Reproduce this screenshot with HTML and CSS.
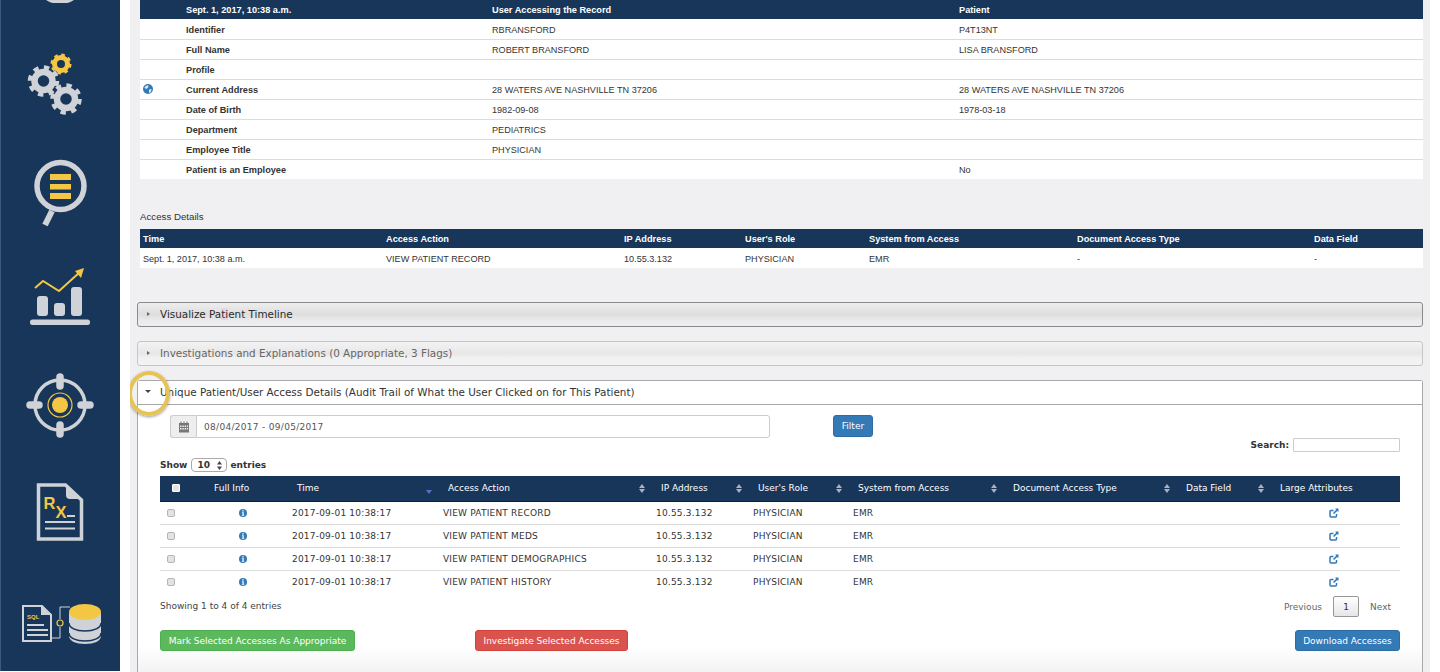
FILE: index.html
```html
<!DOCTYPE html>
<html lang="en">
<head>
<meta charset="utf-8">
<title>Access Details</title>
<link rel="stylesheet" href="styles.css">
</head>
<body>
<div class="app">
  <nav class="sidebar">
    <svg class="ico ico-top" width="120" height="3" viewBox="0 0 120 3"><ellipse cx="60" cy="-9" rx="17" ry="11" fill="none" stroke="#cfd2d6" stroke-width="4"/></svg>
    <svg class="ico ico-gears" width="120" height="64" viewBox="0 51 120 64">
      <g fill="none" stroke="#cfd2d6">
        <circle cx="43.500" cy="81" r="9" stroke-width="6.500"/>
        <circle cx="43.500" cy="81" r="13.500" stroke-width="4.500" stroke-dasharray="5.300 5.300"/>
        <circle cx="66" cy="99" r="9" stroke-width="6.500"/>
        <circle cx="66" cy="99" r="13.500" stroke-width="4.500" stroke-dasharray="5.300 5.300"/>
      </g>
      <g fill="none" stroke="#f3c744">
        <circle cx="61" cy="64" r="6.500" stroke-width="5"/>
        <circle cx="61" cy="64" r="9" stroke-width="3" stroke-dasharray="3.500 3.570"/>
      </g>
    </svg>
    <svg class="ico ico-search" width="120" height="68" viewBox="0 159 120 68">
      <circle cx="60.500" cy="186" r="23.500" fill="none" stroke="#cfd2d6" stroke-width="5.500"/>
      <path d="M52 211 45 225" stroke="#cfd2d6" stroke-width="6"/>
      <path d="M50 174h21v6H50zM50 184h21v5.500H50zM50 193h21v6H50z" fill="#f3c744"/>
    </svg>
    <svg class="ico ico-chart" width="120" height="58" viewBox="0 268 120 58">
      <path d="M35 288 43 281 59 291 80 272" fill="none" stroke="#f3c744" stroke-width="2"/>
      <path d="M84 268 75 271 81 278z" fill="#f3c744"/>
      <rect x="37" y="296" width="11" height="20" rx="3" fill="#cfd2d6"/>
      <rect x="54" y="303" width="11" height="13" rx="3" fill="#cfd2d6"/>
      <rect x="71" y="287" width="11" height="29" rx="3" fill="#cfd2d6"/>
      <rect x="30" y="319.500" width="60" height="5.500" rx="2.500" fill="#cfd2d6"/>
    </svg>
    <svg class="ico ico-target" width="120" height="66" viewBox="0 373 120 66">
      <circle cx="60" cy="405" r="25" fill="none" stroke="#cfd2d6" stroke-width="3.500"/>
      <path d="M60 377v9M60 425v9M30 405h9M81 405h9" stroke="#cfd2d6" stroke-width="7.500" stroke-linecap="round"/>
      <circle cx="60" cy="405" r="12" fill="none" stroke="#f3c744" stroke-width="1.200"/>
      <circle cx="60" cy="405" r="8" fill="#f3c744"/>
    </svg>
    <svg class="ico ico-rx" width="120" height="59" viewBox="0 483 120 59">
      <path d="M38.500 485h27L81.500 500v39h-43z" fill="none" stroke="#cfd2d6" stroke-width="3.500"/>
      <path d="M66 484v11a4 4 0 0 0 4 4h12z" fill="#cfd2d6"/>
      <text class="rx" x="43.500" y="509">R<tspan dy="9">X</tspan></text>
      <path d="M67 516h8M45 522h30M45 528.500h30" stroke="#cfd2d6" stroke-width="2"/>
    </svg>
    <svg class="ico ico-sql" width="120" height="42" viewBox="0 603 120 42">
      <path d="M23 606h19l9 9v26H23z" fill="none" stroke="#cfd2d6" stroke-width="2"/>
      <path d="M41 605v10h11z" fill="#cfd2d6"/>
      <text class="sql" x="27" y="619">SQL</text>
      <path d="M27 625h17M27 630h21M27 635h21" stroke="#cfd2d6" stroke-width="2"/>
      <path d="M52 638h8v-11M60 619v-12h10" fill="none" stroke="#cfd2d6" stroke-width="1"/>
      <circle cx="60" cy="623" r="3" fill="none" stroke="#f3c744" stroke-width="1.200"/>
      <path d="M69 613v23c0 5 7 8 16 8s16-3 16-8v-23z" fill="#cfd2d6"/>
      <path d="M69 623c0 5 7 8 16 8s16-3 16-8M69 633c0 5 7 8 16 8s16-3 16-8" fill="none" stroke="#17365a" stroke-width="1.500"/>
      <ellipse cx="85" cy="612" rx="16" ry="8" fill="#f3c744"/>
    </svg>
  </nav>

  <main class="main">
    <table class="info">
      <thead>
        <tr><th></th><th>Sept. 1, 2017, 10:38 a.m.</th><th>User Accessing the Record</th><th>Patient</th></tr>
      </thead>
      <tbody>
        <tr><td></td><td class="lbl">Identifier</td><td>RBRANSFORD</td><td>P4T13NT</td></tr>
        <tr><td></td><td class="lbl">Full Name</td><td>ROBERT BRANSFORD</td><td>LISA BRANSFORD</td></tr>
        <tr><td></td><td class="lbl">Profile</td><td></td><td></td></tr>
        <tr>
          <td><svg class="globe" width="10" height="10" viewBox="0 0 10 10"><circle cx="5" cy="5" r="5" fill="#337ab7"/><path d="M2 2.500 5 1 5.500 3 3.500 5 1.500 4zM6 5.500 8.500 5 8 8 6 9z" fill="#dbe8f3"/></svg></td>
          <td class="lbl">Current Address</td><td>28 WATERS AVE NASHVILLE TN 37206</td><td>28 WATERS AVE NASHVILLE TN 37206</td>
        </tr>
        <tr><td></td><td class="lbl">Date of Birth</td><td>1982-09-08</td><td>1978-03-18</td></tr>
        <tr><td></td><td class="lbl">Department</td><td>PEDIATRICS</td><td></td></tr>
        <tr><td></td><td class="lbl">Employee Title</td><td>PHYSICIAN</td><td></td></tr>
        <tr><td></td><td class="lbl">Patient is an Employee</td><td></td><td>No</td></tr>
      </tbody>
    </table>

    <h4 class="caption">Access Details</h4>
    <table class="access">
      <thead>
        <tr><th>Time</th><th>Access Action</th><th>IP Address</th><th>User's Role</th><th>System from Access</th><th>Document Access Type</th><th>Data Field</th></tr>
      </thead>
      <tbody>
        <tr><td>Sept. 1, 2017, 10:38 a.m.</td><td>VIEW PATIENT RECORD</td><td>10.55.3.132</td><td>PHYSICIAN</td><td>EMR</td><td>-</td><td>-</td></tr>
      </tbody>
    </table>

    <div class="acc acc-hover"><span class="tri-r"></span><span>Visualize Pa<span class="cursor">ti</span>ent Timeline</span></div>
    <div class="acc acc-muted"><span class="tri-r"></span><span>Investigations and Explanations (0 Appropriate, 3 Flags)</span></div>

    <section class="panel">
      <div class="acc acc-open"><span class="tri-d"></span><span>Unique Patient/User Access Details (Audit Trail of What the User Clicked on for This Patient)</span></div>
      <div class="ring"></div>
      <div class="panel-body">
        <div class="filter-row">
          <div class="date-group">
            <span class="addon">
              <svg width="12" height="12" viewBox="0 0 12 12"><path d="M1 2h10v9.500H1z" fill="#777"/><path d="M2 4.500h1.500v1.500H2zM4.300 4.500h1.500v1.500H4.300zM6.600 4.500h1.500v1.500H6.600zM8.900 4.500h1.200v1.500H8.900zM2 7h1.500v1.500H2zM4.300 7h1.500v1.500H4.300zM6.600 7h1.500v1.500H6.600zM8.900 7h1.200v1.500H8.900z" fill="#eee"/><path d="M3 .5v2.500M6 .5v2.500M9 .5v2.500" stroke="#777"/></svg>
            </span>
            <span class="date-input">08/04/2017 - 09/05/2017</span>
          </div>
          <span class="btn btn-blue btn-filter">Filter</span>
        </div>
        <div class="search-row"><b>Search:</b><span class="search-input"></span></div>
        <div class="length-row"><b>Show</b><span class="select"><b>10</b><svg width="5" height="9" viewBox="0 0 5 9"><path d="M2.500 0 5 3.500H0zM2.500 9 0 5.500h5z" fill="#444"/></svg></span><b>entries</b></div>

        <table class="audit">
          <thead>
            <tr>
              <th class="c-check"><span class="head-check"></span></th>
              <th class="c-full">Full Info</th>
              <th class="sorted">Time</th>
              <th class="sort">Access Action</th>
              <th class="sort">IP Address</th>
              <th class="sort">User's Role</th>
              <th class="sort">System from Access</th>
              <th class="sort">Document Access Type</th>
              <th class="sort">Data Field</th>
              <th>Large Attributes</th>
            </tr>
          </thead>
          <tbody>
            <tr>
              <td><span class="check"></span></td>
              <td class="center"><svg class="i" width="8" height="8" viewBox="0 0 9 9"><circle cx="4.500" cy="4.500" r="4.500" fill="#337ab7"/><path d="M3.700 1.500h1.600v1.400H3.700zM3.300 3.700h2v3h.6v.9H3.200v-.9h.7V4.600h-.6z" fill="#fff"/></svg></td>
              <td>2017-09-01 10:38:17</td><td>VIEW PATIENT RECORD</td><td>10.55.3.132</td><td>PHYSICIAN</td><td>EMR</td><td></td><td></td>
              <td class="center last"><svg class="x" width="10" height="10" viewBox="0 0 10 10"><path d="M7.500 6v2a1 1 0 0 1-1 1H2a1 1 0 0 1-1-1V3.500a1 1 0 0 1 1-1h2.500" fill="none" stroke="#337ab7" stroke-width="1.500"/><path d="M6 .5h3.500V4L8.300 2.900 5 6 4 5l3.200-3.200z" fill="#337ab7"/></svg></td>
            </tr>
            <tr>
              <td><span class="check"></span></td>
              <td class="center"><svg class="i" width="8" height="8" viewBox="0 0 9 9"><circle cx="4.500" cy="4.500" r="4.500" fill="#337ab7"/><path d="M3.700 1.500h1.600v1.400H3.700zM3.300 3.700h2v3h.6v.9H3.200v-.9h.7V4.600h-.6z" fill="#fff"/></svg></td>
              <td>2017-09-01 10:38:17</td><td>VIEW PATIENT MEDS</td><td>10.55.3.132</td><td>PHYSICIAN</td><td>EMR</td><td></td><td></td>
              <td class="center last"><svg class="x" width="10" height="10" viewBox="0 0 10 10"><path d="M7.500 6v2a1 1 0 0 1-1 1H2a1 1 0 0 1-1-1V3.500a1 1 0 0 1 1-1h2.500" fill="none" stroke="#337ab7" stroke-width="1.500"/><path d="M6 .5h3.500V4L8.300 2.900 5 6 4 5l3.200-3.200z" fill="#337ab7"/></svg></td>
            </tr>
            <tr>
              <td><span class="check"></span></td>
              <td class="center"><svg class="i" width="8" height="8" viewBox="0 0 9 9"><circle cx="4.500" cy="4.500" r="4.500" fill="#337ab7"/><path d="M3.700 1.500h1.600v1.400H3.700zM3.300 3.700h2v3h.6v.9H3.200v-.9h.7V4.600h-.6z" fill="#fff"/></svg></td>
              <td>2017-09-01 10:38:17</td><td>VIEW PATIENT DEMOGRAPHICS</td><td>10.55.3.132</td><td>PHYSICIAN</td><td>EMR</td><td></td><td></td>
              <td class="center last"><svg class="x" width="10" height="10" viewBox="0 0 10 10"><path d="M7.500 6v2a1 1 0 0 1-1 1H2a1 1 0 0 1-1-1V3.500a1 1 0 0 1 1-1h2.500" fill="none" stroke="#337ab7" stroke-width="1.500"/><path d="M6 .5h3.500V4L8.300 2.900 5 6 4 5l3.200-3.200z" fill="#337ab7"/></svg></td>
            </tr>
            <tr>
              <td><span class="check"></span></td>
              <td class="center"><svg class="i" width="8" height="8" viewBox="0 0 9 9"><circle cx="4.500" cy="4.500" r="4.500" fill="#337ab7"/><path d="M3.700 1.500h1.600v1.400H3.700zM3.300 3.700h2v3h.6v.9H3.200v-.9h.7V4.600h-.6z" fill="#fff"/></svg></td>
              <td>2017-09-01 10:38:17</td><td>VIEW PATIENT HISTORY</td><td>10.55.3.132</td><td>PHYSICIAN</td><td>EMR</td><td></td><td></td>
              <td class="center last"><svg class="x" width="10" height="10" viewBox="0 0 10 10"><path d="M7.500 6v2a1 1 0 0 1-1 1H2a1 1 0 0 1-1-1V3.500a1 1 0 0 1 1-1h2.500" fill="none" stroke="#337ab7" stroke-width="1.500"/><path d="M6 .5h3.500V4L8.300 2.900 5 6 4 5l3.200-3.200z" fill="#337ab7"/></svg></td>
            </tr>
          </tbody>
        </table>

        <div class="foot-row">
          <span class="foot-info">Showing 1 to 4 of 4 entries</span>
          <div class="pager"><span>Previous</span><span class="page">1</span><span>Next</span></div>
        </div>
        <div class="action-row">
          <span class="btn btn-green">Mark Selected Accesses As Appropriate</span>
          <span class="btn btn-red">Investigate Selected Accesses</span>
          <span class="btn btn-blue btn-download">Download Accesses</span>
        </div>
      </div>
    </section>
  </main>
</div>
</body>
</html>
```

FILE: styles.css
```css
* { box-sizing: border-box; }
html, body { margin: 0; padding: 0; background: #fff; }
body { width: 1440px; height: 672px; overflow: hidden; color: #333; }

.app { display: flex; height: 672px; }

/* sidebar */
.sidebar {
  flex: 0 0 120px;
  height: 671px;
  background: #17365a;
  border-left: 1px solid #3c5a80;
  overflow: hidden;
}
.ico { display: block; margin-left: -1px; }
.ico-gears { margin-top: 48px; }
.ico-search { margin-top: 44px; }
.ico-chart { margin-top: 41px; }
.ico-target { margin-top: 47px; }
.ico-rx { margin-top: 44px; }
.ico-sql { margin-top: 61px; }
.rx { font: 700 16.5px "Liberation Sans", Arial, sans-serif; fill: #f3c744; }
.sql { font: 700 6px "Liberation Sans", Arial, sans-serif; fill: #f3c744; }

/* main column */
.main {
  flex: 0 0 1300px;
  margin-left: 10px;
  height: 672px;
  padding: 0 7px;
  background: #f0f0f2;
  overflow: hidden;
}

/* top tables */
.info, .access {
  width: 1283px;
  margin-left: 3px;
  border-collapse: collapse;
  table-layout: fixed;
  background: #fff;
  font: 9.1px "Liberation Sans", Arial, sans-serif;
}
.info th, .access th {
  background: #17365a;
  color: #fff;
  font-weight: 700;
  font-size: 9.2px;
  text-align: left;
  padding: 0 3px;
}
.info th { height: 19px; }
.info td {
  height: 20px;
  padding: 2px 3px 0;
  border-top: 1px solid #dcdcdc;
}
.info tbody tr:first-child td { border-top: 0; height: 20px; }
.info th:nth-child(1) { width: 43px; }
.info th:nth-child(2) { width: 306px; }
.info th:nth-child(3) { width: 467px; }
.lbl { font-weight: 700; font-size: 9.2px; }
.globe { display: block; margin-bottom: 2px; }

.caption {
  margin: 33px 0 0 3px;
  height: 17px;
  font: 400 9.7px/10px "Liberation Sans", Arial, sans-serif;
  padding-top: 0;
  color: #333;
}
.access th { height: 19px; }
.access td { height: 20px; padding: 1px 3px 0; }
.access th:nth-child(1) { width: 243px; }
.access th:nth-child(2) { width: 238px; }
.access th:nth-child(3) { width: 121px; }
.access th:nth-child(4) { width: 124px; }
.access th:nth-child(5) { width: 208px; }
.access th:nth-child(6) { width: 237px; }

/* accordions */
.acc {
  display: flex;
  align-items: center;
  height: 25px;
  padding: 0 0 2px 9px;
  border: 1px solid #c5c5c5;
  border-radius: 3px;
  font: 10.4px "DejaVu Sans", Verdana, sans-serif;
  color: #454545;
  background: linear-gradient(#f3f3f3, #e7e7e7 50%, #f1f1f1 70%, #f3f3f3);
}
.acc-hover {
  margin-top: 34px;
  border-color: #8a8a8a;
  color: #2b2b2b;
  background: linear-gradient(#ededed, #dedede 50%, #eaeaea 75%, #ededed);
}
.acc-muted { margin-top: 14px; color: #666; }
.tri-r {
  width: 0; height: 0;
  margin-right: 10px;
  border-left: 3px solid #666;
  border-top: 2.500px solid transparent;
  border-bottom: 2.500px solid transparent;
}
.tri-d {
  width: 0; height: 0;
  margin-right: 9px;
  border-top: 3px solid #444;
  border-left: 3px solid transparent;
  border-right: 3px solid transparent;
}
.cursor { background: #e6d5e6; }

.panel {
  position: relative;
  margin-top: 14px;
  height: 292px;
  border: 1px solid #a8a8a8;
  border-bottom: 0;
  border-radius: 3px 3px 0 0;
  background: linear-gradient(#fff 265px, #f3f3f3);
}
.acc-open {
  height: 24px;
  border: 0;
  border-bottom: 1px solid #a8a8a8;
  border-radius: 0;
  background: #fff;
  color: #333;
  padding-left: 7px;
}
.ring {
  position: absolute;
  left: -10px;
  top: -10px;
  width: 42px;
  height: 45px;
  border: 4px solid #e6c257;
  border-radius: 50%;
  box-shadow: 0 1px 3px rgba(0, 0, 0, .4);
}
.panel-body {
  padding: 10px 22px 0;
  font: 9px "DejaVu Sans", Verdana, sans-serif;
}

.filter-row { display: flex; align-items: flex-start; height: 23px; padding-left: 10px; }
.date-group { display: flex; width: 600px; height: 23px; }
.addon {
  flex: 0 0 26px;
  display: flex;
  align-items: center;
  justify-content: center;
  background: #eee;
  border: 1px solid #ccc;
  border-right: 0;
  border-radius: 3px 0 0 3px;
}
.date-input {
  flex: 1;
  display: flex;
  align-items: center;
  padding-left: 7px;
  border: 1px solid #ccc;
  border-radius: 0 3px 3px 0;
  color: #555;
  background: #fff;
  letter-spacing: .3px;
}
.btn {
  display: inline-flex;
  align-items: center;
  justify-content: center;
  height: 21px;
  border-radius: 3px;
  border: 1px solid;
  color: #fff;
}
.btn-blue { background: #337ab7; border-color: #2e6da4; }
.btn-green { background: #5cb85c; border-color: #4cae4c; width: 195px; }
.btn-red { background: #d9534f; border-color: #d43f3a; width: 153px; margin-left: 120px; }
.btn-filter { width: 40px; height: 22px; margin-left: 63px; }
.btn-download { width: 105px; margin-left: auto; }

.search-row {
  display: flex;
  justify-content: flex-end;
  align-items: center;
  gap: 4px;
  height: 14px;
}
.search-input {
  width: 107px;
  height: 14px;
  border: 1px solid #ccc;
  border-radius: 1px;
  background: #fff;
}
.length-row {
  display: flex;
  align-items: center;
  gap: 4px;
  height: 14px;
  margin-top: 6px;
}
.select {
  display: flex;
  align-items: center;
  justify-content: space-between;
  width: 36px;
  height: 14px;
  margin-right: -1px;
  padding: 0 4px 0 5px;
  border: 1px solid #aaa;
  border-radius: 4px;
}

/* audit table */
.audit {
  width: 1240px;
  margin-top: 4px;
  border-collapse: collapse;
  table-layout: fixed;
  background: #fff;
}
.audit th {
  position: relative;
  height: 25px;
  padding: 0 0 1px 10px;
  background: #17365a;
  border-bottom: 1px solid #0d1f36;
  color: #fff;
  font-weight: 400;
  text-align: left;
  white-space: nowrap;
}
.audit td {
  height: 23px;
  padding: 0 5px;
  border-top: 1px solid #dcdcdc;
  white-space: nowrap;
  letter-spacing: .2px;
}
.audit tbody tr:first-child td { border-top: 0; }
.audit .center { text-align: center; padding: 0; }
.audit .last { padding-right: 2px; }
.audit svg { display: block; margin: 0 auto; }
.audit th:nth-child(1) { width: 39px; padding-left: 12px; }
.audit th:nth-child(2) { width: 88px; padding-left: 15px; }
.audit th:nth-child(3) { width: 151px; }
.audit th:nth-child(4) { width: 213px; }
.audit th:nth-child(5) { width: 97px; }
.audit th:nth-child(6) { width: 100px; }
.audit th:nth-child(7) { width: 155px; }
.audit th:nth-child(8) { width: 173px; }
.audit th:nth-child(9) { width: 94px; }
.head-check {
  display: block;
  width: 8px;
  height: 8px;
  background: #e4e4e4;
  border: 1px solid #fff;
  border-radius: 1px;
}
.check {
  display: block;
  width: 8px;
  height: 8px;
  margin: 1px 0 0 2px;
  background: #e3e3e3;
  border: 1px solid #b5b5b5;
  border-radius: 2px;
}
.sort::before, .sort::after, .sorted::after {
  content: "";
  position: absolute;
  right: 6px;
  border-left: 3px solid transparent;
  border-right: 3px solid transparent;
}
.sort::before { top: 8px; border-bottom: 4px solid #aab1bb; }
.sort::after { top: 13px; border-top: 4px solid #aab1bb; }
.sorted::after { top: 14px; border-top: 4px solid #5b6fc4; }

.foot-row {
  display: flex;
  justify-content: space-between;
  align-items: center;
  height: 21px;
  margin-top: 3px;
  color: #444;
}
.foot-info { padding-bottom: 2px; }
.pager { display: flex; align-items: center; gap: 11px; color: #666; padding-right: 9px; }
.page {
  display: flex;
  align-items: center;
  justify-content: center;
  width: 26px;
  height: 21px;
  border: 1px solid #979797;
  border-radius: 2px;
  color: #333;
  background: linear-gradient(#fff, #e6e6e6);
}
.action-row { display: flex; margin-top: 13px; }
```
